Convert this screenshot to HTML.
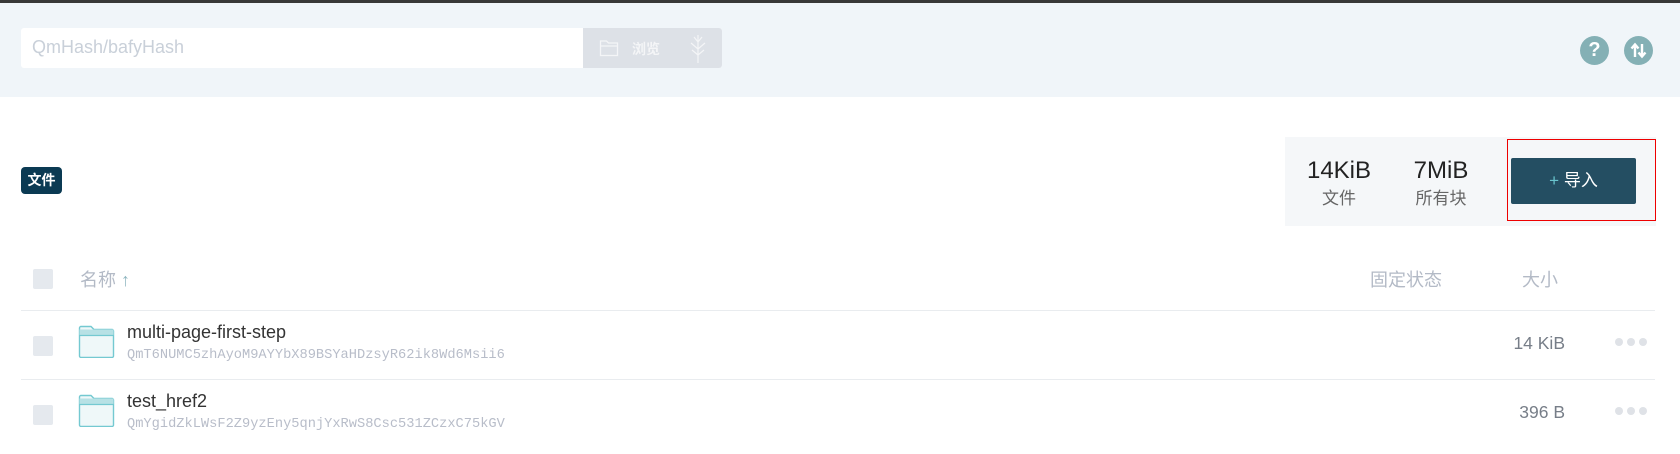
<!DOCTYPE html>
<html><head><meta charset="utf-8"><style>
*{margin:0;padding:0;box-sizing:border-box}
body{width:1680px;height:454px;background:#fff;position:relative;overflow:hidden;font-family:"Liberation Sans","Noto Sans CJK SC",sans-serif}
.a{position:absolute}
.cb{position:absolute;left:33px;width:20px;height:20px;background:#e5e9ee;border-radius:2px}
.name{position:absolute;left:127px;font-size:18px;color:#333}
.hash{position:absolute;left:127px;font-family:"Liberation Mono",monospace;font-size:13.7px;color:#b8bdc9}
.sz{position:absolute;right:115px;font-size:17.5px;color:#777e88}
.dots{position:absolute;left:1615px;display:flex;gap:4px}
.dots i{width:8px;height:8px;border-radius:50%;background:#dfe2e7;display:block}
.line{position:absolute;left:21px;width:1634px;height:1px;background:#e9ecef}
.hd{position:absolute;top:266px;font-size:18px;color:#b3bac6}
</style></head><body>
<div class="a" style="left:0;top:0;width:1680px;height:3px;background:#383838"></div>
<div class="a" style="left:0;top:3px;width:1680px;height:94px;background:#f0f5f9"></div>
<div class="a" style="left:21px;top:28px;width:701px;height:40px;background:#fff;border-radius:3px"></div>
<div class="a" style="left:32px;top:37px;font-size:18px;color:#c9d0d9">QmHash/bafyHash</div>
<div class="a" style="left:583px;top:28px;width:139px;height:40px;background:#dde1e7;border-radius:0 3px 3px 0"></div>
<svg class="a" style="left:599px;top:38px" width="20" height="20" viewBox="0 0 20 20"><path d="M1.5 3h6l2 2h9v12.5h-17z M1.5 8h17" fill="none" stroke="#f4f5f7" stroke-width="1.3"/></svg>
<div class="a" style="left:632px;top:39px;font-size:14px;font-weight:bold;color:#f4f5f7">浏览</div>
<svg class="a" style="left:688px;top:33px" width="20" height="32" viewBox="0 0 20 32"><path d="M10 2v28M10 9l-4-5M10 9l4-5M10 16l-7-6M10 16l7-6M10 22l-6-5M10 22l6-5" fill="none" stroke="#f4f5f7" stroke-width="1.2"/></svg>
<div class="a" style="left:1580px;top:36px;width:29px;height:29px;border-radius:50%;background:#84b0b5;color:#fff;font-weight:bold;font-size:20px;text-align:center;line-height:29px">?</div>
<div class="a" style="left:1624px;top:36px;width:29px;height:29px;border-radius:50%;background:#84b0b5"></div>
<svg class="a" style="left:1624px;top:36px" width="29" height="29" viewBox="0 0 29 29"><path d="M11 21V9M7.5 12.5L11 8.5l3.5 4M18 8v12M14.5 16.5L18 20.5l3.5-4" fill="none" stroke="#fff" stroke-width="2.4"/></svg>
<div class="a" style="left:21px;top:167px;width:41px;height:27px;background:#0b3a53;border-radius:4px;color:#fff;font-size:14px;font-weight:bold;text-align:center;line-height:27px">文件</div>
<div class="a" style="left:1285px;top:137px;width:371px;height:89px;background:#f5f7f9"></div>
<div class="a" style="left:1304px;top:157px;font-size:24px;color:#222;width:70px;text-align:center">14KiB</div>
<div class="a" style="left:1304px;top:184px;font-size:17px;color:#666;width:70px;text-align:center">文件</div>
<div class="a" style="left:1408px;top:157px;font-size:24px;color:#222;width:66px;text-align:center">7MiB</div>
<div class="a" style="left:1408px;top:184px;font-size:17px;color:#666;width:66px;text-align:center">所有块</div>
<div class="a" style="left:1507px;top:139px;width:149px;height:82px;border:1px solid #e00"></div>
<div class="a" style="left:1511px;top:158px;width:125px;height:46px;background:#244e62;border-radius:2px;color:#fff;font-size:17px;text-align:center;line-height:46px"><span style="color:#69c4cd">+</span> 导入</div>
<div class="cb" style="top:269px"></div>
<div class="hd" style="left:80px">名称 <span style="color:#8fb6c0">↑</span></div>
<div class="hd" style="left:1370px">固定状态</div>
<div class="hd" style="left:1522px">大小</div>
<div class="line" style="top:310px"></div>
<div class="line" style="top:379px"></div>
<div class="cb" style="top:336px"></div>
<div class="cb" style="top:405px"></div>
<svg class="a" style="left:78px;top:325px" width="37" height="33" viewBox="0 0 37 33"><path d="M1.5 3a1.5 1.5 0 0 1 1.5-1.5h10l3 3h18a1.5 1.5 0 0 1 1.5 1.5v25a1.5 1.5 0 0 1-1.5 1.5H3a1.5 1.5 0 0 1-1.5-1.5z" fill="#eff8f9" stroke="#74c9d1" stroke-width="1.4"/><path d="M1.5 4.5h34v6h-34z" fill="#b7e1e5"/><path d="M1.5 10.5h34" stroke="#74c9d1" stroke-width="1.2"/></svg>
<svg class="a" style="left:78px;top:394px" width="37" height="33" viewBox="0 0 37 33"><path d="M1.5 3a1.5 1.5 0 0 1 1.5-1.5h10l3 3h18a1.5 1.5 0 0 1 1.5 1.5v25a1.5 1.5 0 0 1-1.5 1.5H3a1.5 1.5 0 0 1-1.5-1.5z" fill="#eff8f9" stroke="#74c9d1" stroke-width="1.4"/><path d="M1.5 4.5h34v6h-34z" fill="#b7e1e5"/><path d="M1.5 10.5h34" stroke="#74c9d1" stroke-width="1.2"/></svg>
<div class="name" style="top:322px">multi-page-first-step</div>
<div class="hash" style="top:348px">QmT6NUMC5zhAyoM9AYYbX89BSYaHDzsyR62ik8Wd6Msii6</div>
<div class="name" style="top:391px">test_href2</div>
<div class="hash" style="top:417px">QmYgidZkLWsF2Z9yzEny5qnjYxRwS8Csc531ZCzxC75kGV</div>
<div class="sz" style="top:333px">14 KiB</div>
<div class="sz" style="top:402px">396 B</div>
<div class="dots" style="top:338px"><i></i><i></i><i></i></div>
<div class="dots" style="top:407px"><i></i><i></i><i></i></div>
</body></html>
